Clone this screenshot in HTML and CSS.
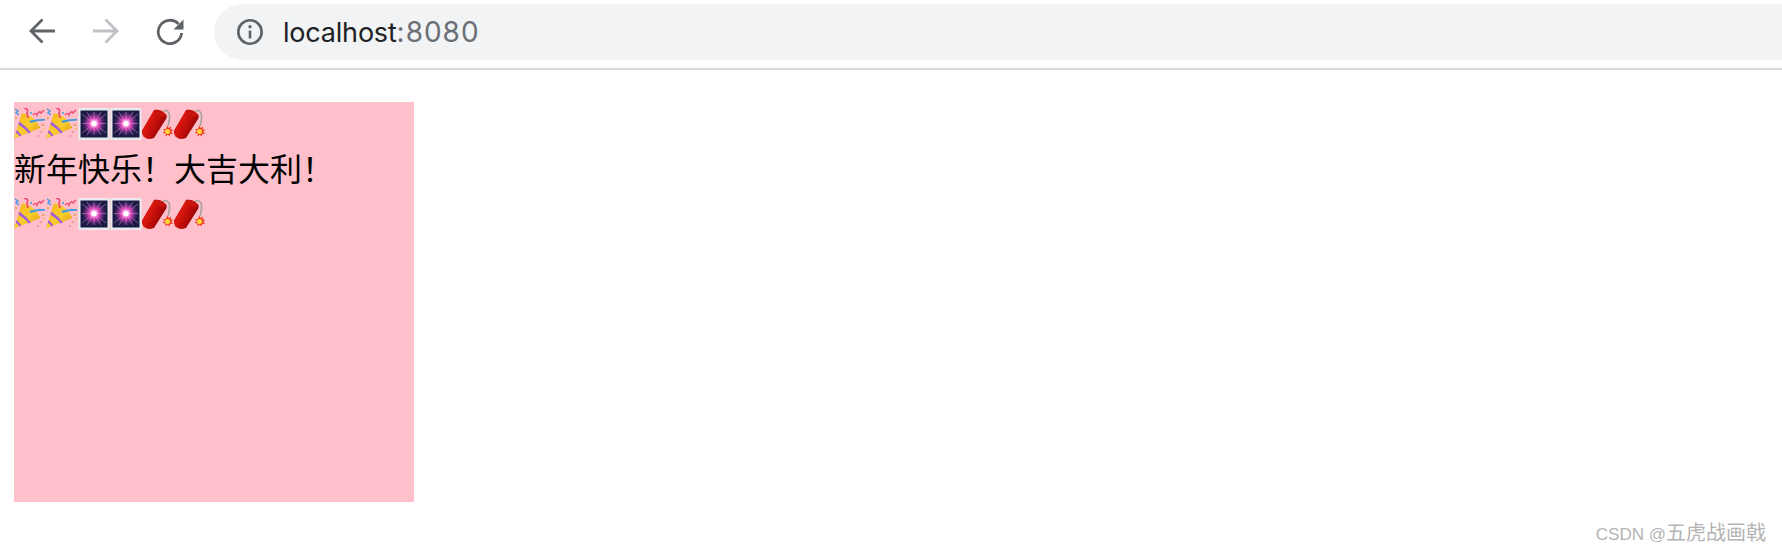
FILE: index.html
```html
<!DOCTYPE html>
<html>
<head>
    <title>localhost:8080</title>
    <link rel="stylesheet" href="styles.css">
</head>
<body>
    <svg class="defs" width="0" height="0">
        <defs>
            <linearGradient id="coneGold" x1="0" y1="0" x2="1" y2="1">
                <stop offset="0" stop-color="#f6b81e"/>
                <stop offset="0.55" stop-color="#f8cc2c"/>
                <stop offset="1" stop-color="#d98c0c"/>
            </linearGradient>
            <linearGradient id="stickRed" x1="0" y1="0.2" x2="1" y2="0.8">
                <stop offset="0" stop-color="#a00806"/>
                <stop offset="0.3" stop-color="#dc160e"/>
                <stop offset="0.65" stop-color="#b00a07"/>
                <stop offset="1" stop-color="#5c0202"/>
            </linearGradient>
            <radialGradient id="burst" cx="0.5" cy="0.5" r="0.5">
                <stop offset="0" stop-color="#fff"/>
                <stop offset="0.2" stop-color="#ffd0f4"/>
                <stop offset="0.42" stop-color="#dc44b8"/>
                <stop offset="0.75" stop-color="#54286f"/>
                <stop offset="1" stop-color="#1a1b45"/>
            </radialGradient>
            <symbol id="popper" viewBox="0 0 32 32">
                <path d="M0 30.500 L8 5 Q20 7 26.500 20 Z" fill="url(#coneGold)"/>
                <path d="M5.300 13.500 Q12 18 17 24.500 L14.800 25.500 Q10 20 4.300 16.500 Z" fill="#a65fd8"/>
                <path d="M2.600 22 Q5.500 24 7.600 27.700 L5.600 28.500 Q3.800 25.800 1.700 24.800 Z" fill="#a65fd8"/>
                <path d="M15 13 Q22 10.500 31 11 L31 12.800 Q23 12.500 17 15 Z" fill="#3f9ae0"/>
                <path d="M1 1 l3 2 l-2 2 l3 2" fill="none" stroke="#3f9ae0" stroke-width="1.500"/>
                <path d="M10 0 q5 1 3 5 l1 5" fill="none" stroke="#ef4f78" stroke-width="1.800"/>
                <path d="M19 7 q3 -3 4 0 q2 -5 4 -2 l3 -3" fill="none" stroke="#ef4f78" stroke-width="1.500"/>
                <circle cx="17" cy="5" r="1" fill="#3f9ae0"/>
                <circle cx="29" cy="17" r="1.300" fill="#f0a060"/>
                <circle cx="27" cy="24" r="1.500" fill="#f5a0a0"/>
                <circle cx="30" cy="21" r="1" fill="#e8c050"/>
                <circle cx="24" cy="28" r="1.300" fill="#f59ab0"/>
                <circle cx="2" cy="10" r="1" fill="#e0a040"/>
            </symbol>
            <symbol id="fireworks" viewBox="0 0 32 32">
                <rect x="0.500" y="0" width="31" height="32" fill="#e8ecee"/>
                <rect x="2.500" y="2.500" width="27" height="27" fill="#1a1b45"/>
                <circle cx="16" cy="15.500" r="12" fill="url(#burst)"/>
                <g stroke="#f090dc" stroke-width="0.700" stroke-opacity="0.700">
                    <path d="M16 15.500 L4 6 M16 15.500 L28 6 M16 15.500 L4 25 M16 15.500 L28 25"/>
                    <path d="M16 15.500 L16 4 M16 15.500 L16 27 M16 15.500 L4 15.500 M16 15.500 L28 15.500"/>
                    <path d="M16 15.500 L9 4 M16 15.500 L23 4 M16 15.500 L9 27 M16 15.500 L23 27"/>
                </g>
                <circle cx="16" cy="15.500" r="2.600" fill="#fff"/>
            </symbol>
            <symbol id="cracker" viewBox="0 0 32 32">
                <path d="M19 5 Q24 0 27 5 Q28.500 10 26 18" fill="none" stroke="#a8a29a" stroke-width="1.700"/>
                <path d="M0 22.500 L12 2 Q19 1 24.500 7 Q25 9 24 11 L12 30 Q5 32.500 1.500 28.500 Q-0.500 25.500 0 22.500 Z" fill="url(#stickRed)"/>
                <path d="M12 2 Q19 1 24.500 7 Q22 10 17 8 Q13 6.500 12 2 Z" fill="#c8140e"/>
                <path d="M25.500 17.500 l1.100 2.500 l2.400 -1.400 l-0.400 2.800 l3 0.400 l-2.400 1.800 l2 2.300 l-3 -0.200 l-0.500 2.900 l-1.900 -2.200 l-2.200 2 l0 -2.900 l-2.900 -0.500 l2.200 -1.900 l-1.900 -2.200 l2.900 0 Z" fill="#ef3b1c"/>
                <circle cx="25.500" cy="23.500" r="2.500" fill="#ffd83a"/>
            </symbol>
        </defs>
    </svg>

    <div class="toolbar">
        <div class="nav">
            <svg class="nav-icon" viewBox="0 0 28 28"><path d="M27 14H3M14.500 2.500L3 14l11.500 11.500"/></svg>
            <svg class="nav-icon disabled" viewBox="0 0 28 28"><path d="M1 14h24M13.500 2.500L25 14 13.500 25.500"/></svg>
            <svg class="nav-icon" viewBox="0 0 28 28">
                <path d="M22.500 7A11.700 11.700 0 1 0 25.600 16"/>
                <path class="solid" d="M27.500 2.500v10h-10z"/>
            </svg>
        </div>
        <div class="address">
            <svg class="info" viewBox="0 0 28 28">
                <circle cx="14" cy="14" r="11.700"/>
                <path d="M14 12.500v8"/>
                <circle class="solid" cx="14" cy="8.800" r="1.700"/>
            </svg>
            <span class="host">localhost</span><span class="port">:8080</span>
        </div>
    </div>

    <div class="box">
        <div class="emoji-row">
            <svg class="emoji"><use href="#popper"/></svg><svg class="emoji"><use href="#popper"/></svg><svg class="emoji"><use href="#fireworks"/></svg><svg class="emoji"><use href="#fireworks"/></svg><svg class="emoji"><use href="#cracker"/></svg><svg class="emoji"><use href="#cracker"/></svg>
        </div>
        <div class="greeting">新年快乐！大吉大利！</div>
        <div class="emoji-row">
            <svg class="emoji"><use href="#popper"/></svg><svg class="emoji"><use href="#popper"/></svg><svg class="emoji"><use href="#fireworks"/></svg><svg class="emoji"><use href="#fireworks"/></svg><svg class="emoji"><use href="#cracker"/></svg><svg class="emoji"><use href="#cracker"/></svg>
        </div>
    </div>

    <div class="watermark"><span class="watermark-latin">CSDN @</span>五虎战画戟</div>
</body>
</html>
```

FILE: styles.css
```css
html, body {
    height: 100%;
}

body {
    position: relative;
    margin: 0;
    overflow: hidden;
    background-color: #fff;
    font-family: "Liberation Sans", "Noto Sans CJK SC", sans-serif;
}

.defs {
    position: absolute;
}

.toolbar {
    display: flex;
    align-items: flex-start;
    height: 70px;
    padding-top: 4px;
    box-sizing: border-box;
    border-bottom: 2px solid #d9dadc;
}

.nav {
    display: flex;
    gap: 36px;
    width: 214px;
    padding: 13px 0 0 28px;
    box-sizing: border-box;
}

.nav-icon {
    width: 28px;
    height: 28px;
    fill: none;
    stroke: #5f6368;
    stroke-width: 2.8;
}

.nav-icon.disabled {
    stroke: #bdc1c6;
}

.nav-icon .solid,
.info .solid {
    fill: #5f6368;
    stroke: none;
}

.address {
    flex: 1;
    display: flex;
    align-items: center;
    height: 56px;
    padding-left: 22px;
    border-radius: 28px 0 0 28px;
    background-color: #f1f3f4;
    font-family: Inter, "Liberation Sans", sans-serif;
    font-size: 27px;
}

.info {
    width: 28px;
    height: 28px;
    margin-right: 19px;
    fill: none;
    stroke: #5f6368;
    stroke-width: 2.6;
}

.host {
    color: #202124;
    letter-spacing: -0.2px;
}

.port {
    color: #6b6f74;
    font-size: 28px;
    letter-spacing: 1px;
}

.box {
    width: 400px;
    height: 400px;
    margin: 32px 0 0 14px;
    background-color: #ffc0cb;
    font-family: "Noto Sans CJK SC", sans-serif;
}

.emoji-row {
    display: flex;
    padding-top: 6px;
    height: 38px;
    box-sizing: border-box;
}

.emoji {
    width: 32px;
    height: 32px;
}

.greeting {
    height: 52px;
    padding-top: 4px;
    box-sizing: border-box;
    font-size: 32px;
    line-height: 46px;
    color: #000;
    white-space: nowrap;
}

.watermark {
    position: absolute;
    right: 16px;
    bottom: 5px;
    font-size: 20px;
    line-height: 24px;
    color: #b4b4b4;
}

.watermark-latin {
    font-size: 17px;
}
```
